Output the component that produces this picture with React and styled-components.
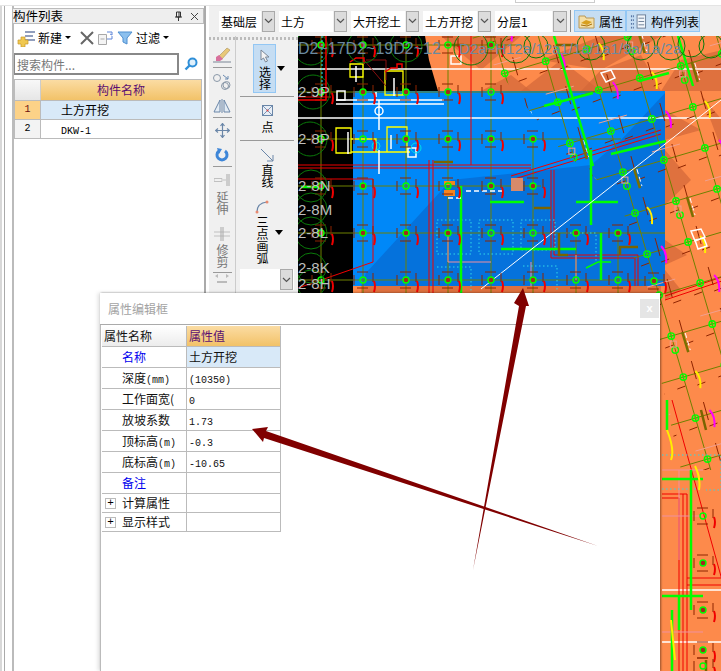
import React from "react";
import styled, { createGlobalStyle } from "styled-components";

const CJK = `"Noto Sans CJK SC", "Liberation Sans", sans-serif`;

const Global = createGlobalStyle`
  html, body { margin: 0; padding: 0; background: #fff; }
  body { font-family: ${CJK}; font-size: 12px; color: #000; }
`;

const Window = styled.div`
  position: relative;
  width: 721px;
  height: 671px;
  overflow: hidden;
  background: #fff;
  display: flex;
  flex-direction: column;
`;
const TopEdge = styled.div`
  height: 5px;
  flex: none;
  border-bottom: 1px solid #e4e4e4;
  display: flex;
  justify-content: flex-end;
  padding-right: 126px;
  div { width: 78px; height: 2px; border: 1px solid #ccc; border-top: none; }
`;
const Main = styled.div`
  flex: 1;
  display: flex;
  min-height: 0;
`;
const Sliver = styled.div`
  width: 4px;
  margin-right: 7px;
  flex: none;
  border-right: 1px solid #aaa;
  background: linear-gradient(to right, #d8d8d8 2px, #fff 2px);
`;

/* left list panel */
const ListPanel = styled.div`
  width: 190px;
  flex: none;
  border-left: 2px solid #bbb;
  border-right: 2px solid #aaa;
  padding-top: 2px;
  display: flex;
  flex-direction: column;
`;
const PanelTitle = styled.div`
  height: 14px;
  margin-left: -2px;
  background: #eee;
  border: 1px solid #bbb;
  display: flex;
  align-items: center;
  justify-content: space-between;
  padding-right: 4px;
  line-height: 14px;
  font-size: 12.5px;
`;
const TitleIcons = styled.div`
  display: flex;
  gap: 7px;
  align-items: center;
`;
const ListToolbar = styled.div`
  height: 27px;
  display: flex;
  align-items: center;
  padding-left: 3px;
  gap: 3px;
`;
const ToolLabel = styled.span`
  display: flex;
  align-items: center;
  gap: 2px;
  margin-right: ${(p) => p.$mr || 0}px;
`;
const Caret = styled.i`
  display: inline-block;
  width: 0;
  height: 0;
  border: 3px solid transparent;
  border-top: 3px solid #000;
  border-bottom: none;
  margin-left: 1px;
`;
const SearchRow = styled.div`
  display: flex;
  align-items: center;
  height: 25px;
  gap: 5px;
`;
const SearchBox = styled.div`
  width: 165px;
  height: 22px;
  border: 1px solid #888;
  border-width: 2px 2px 2px 1px;
  color: #777;
  padding-left: 2px;
  line-height: 20px;
  box-sizing: border-box;
  letter-spacing: 0;
`;
const ListTable = styled.div`
  margin: 3px 1px 0 0;
  width: 188px;
  border: 1px solid #bbb;
  border-top-width: 1px;
  display: grid;
  grid-template-columns: 26px 1fr;
  grid-template-rows: 20px 19px 19px;
  box-sizing: border-box;
`;
const HeadCorner = styled.div`
  background: linear-gradient(#f8f8f8, #e6e6e6);
  border-right: 1px solid #ccc;
`;
const HeadCell = styled.div`
  background: linear-gradient(#fbdca3, #f2c268);
  color: #5b0f72;
  text-align: center;
  line-height: 20px;
`;
const RowNum = styled.div`
  background: ${(p) => (p.$active ? "#fcd288" : "#f3f3f3")};
  color: ${(p) => (p.$active ? "#6b1010" : "#000")};
  border-top: 1px solid #bbb;
  border-right: 1px solid #bbb;
  text-align: center;
  font: 10px/18px "Liberation Mono", monospace;
`;
const RowCell = styled.div`
  background: ${(p) => (p.$active ? "#d8e9f8" : "#fff")};
  border-top: 1px solid #bbb;
  padding-left: 20px;
  line-height: 18px;
`;
const Mono = styled.span`
  font: 10px "Liberation Mono", monospace;
`;

/* right side */
const Workspace = styled.div`
  flex: 1;
  display: flex;
  flex-direction: column;
  min-width: 0;
  padding-left: 3px;
`;
const TopBar = styled.div`
  height: 30px;
  flex: none;
  background: #f0f0f0;
  display: flex;
  align-items: center;
  padding-left: 10px;
  gap: 4px;
  margin-top: 0;
`;
const Combo = styled.div`
  display: flex;
  gap: 1px;
  height: 21px;
`;
const ComboField = styled.div`
  width: ${(p) => p.$w}px;
  background: #fff;
  padding-left: 2px;
  box-sizing: border-box;
  line-height: 21px;
  white-space: nowrap;
  overflow: hidden;
`;
const ComboBtn = styled.div`
  width: ${(p) => p.$w || 13}px;
  box-sizing: border-box;
  background: #dcdcdc;
  border: 1px solid #aaa;
  display: flex;
  align-items: center;
  justify-content: center;
`;
const BarSep = styled.div`
  width: 1px;
  height: 22px;
  background: #888;
  margin: 0 3px 0 -1px;
`;
const ToggleBtn = styled.div`
  height: 22px;
  width: ${(p) => p.$w}px;
  box-sizing: border-box;
  background: #c5ddf3;
  border: 1px solid #93c7f4;
  display: flex;
  align-items: center;
  gap: 4px;
  padding-left: 3px;
  margin-left: -4px;
  white-space: nowrap;
`;
const Body = styled.div`
  flex: 1;
  display: flex;
  min-height: 0;
`;
const ToolStrip = styled.div`
  width: 89px;
  height: 258px;
  flex: none;
  display: flex;
  background: #f0f0f0;
`;
const ToolCol = styled.div`
  width: ${(p) => p.$w}px;
  flex: none;
  box-sizing: border-box;
  border-right: ${(p) => (p.$line ? "1px solid #ccc" : "none")};
  overflow: hidden;
  display: flex;
  flex-direction: column;
  align-items: center;
`;
const Handle = styled.div`
  height: 3px;
  width: 100%;
  flex: none;
  margin: 1px 0 3px;
  background: repeating-linear-gradient(to right, #bbb 0 2px, transparent 2px 4px);
`;
const Slot = styled.div`
  height: ${(p) => p.$h}px;
  flex: none;
  display: flex;
  flex-direction: column;
  align-items: center;
  gap: ${(p) => p.$gap || 0}px;
  justify-content: ${(p) => (p.$top ? "flex-start" : "center")};
  color: ${(p) => (p.$dim ? "#777" : "#000")};
`;
const ToolSep = styled.div`
  height: 1px;
  flex: none;
  width: ${(p) => p.$w}px;
  background: #999;
`;
const VText = styled.div`
  writing-mode: vertical-rl;
  text-orientation: upright;
  white-space: nowrap;
  flex: none;
  line-height: 14px;
  font-size: 12px;
`;
const SelectWrap = styled.div`
  width: 100%;
  height: 50px;
  flex: none;
  display: flex;
  align-items: center;
  justify-content: center;
  padding-left: 4px;
  box-sizing: border-box;
  gap: 1px;
`;
const SelectBtn = styled.div`
  width: 23px;
  height: 49px;
  box-sizing: border-box;
  background: #c5ddf3;
  border: 1px solid #93c7f4;
  display: flex;
  flex-direction: column;
  align-items: center;
  gap: 3px;
  padding-top: 4px;
`;
const ArcRow = styled.div`
  display: flex;
  align-items: center;
  gap: 6px;
  padding-left: 4px;
`;
const ArcCol = styled.div`
  display: flex;
  flex-direction: column;
  align-items: center;
  gap: 2px;
`;
const MiniCombo = styled.div`
  width: 54px;
  height: 21px;
  flex: none;
  display: flex;
  justify-content: flex-end;
  background: #fff;
  padding-right: 1px;
  box-sizing: border-box;
`;
const CanvasBox = styled.div`
  flex: 1;
  min-width: 0;
  overflow: hidden;
  svg { display: block; }
`;

/* dialog */
const Dialog = styled.div`
  position: absolute;
  left: 100px;
  top: 293px;
  width: 560px;
  height: 378px;
  background: #fff;
  box-shadow: -2px 0 4px rgba(0, 0, 0, 0.13), 1px 0 2px rgba(0, 0, 0, 0.4);
  display: flex;
  flex-direction: column;
`;
const DialogHead = styled.div`
  height: 32px;
  flex: none;
  box-sizing: border-box;
  border-bottom: 1px solid #aaa;
  display: flex;
  align-items: center;
  justify-content: space-between;
  padding: 0 1px 0 8px;
  color: #a3a3a3;
`;
const CloseBtn = styled.div`
  width: 19px;
  height: 19px;
  background: #e5e5e5;
  color: #fff;
  font: bold 11px/19px "Liberation Sans", sans-serif;
  text-align: center;
`;
const DialogBody = styled.div`
  flex: 1;
  border-left: 1px solid #bbb;
  padding: 1px 0 0 1px;
`;
const PropTable = styled.div`
  width: 179px;
  box-sizing: border-box;
  border: 1px solid #bbb;
  border-width: 0 1px 0 0;
  display: grid;
  grid-template-columns: 85px 93px;
`;
const PropName = styled.div`
  height: ${(p) => p.$h}px;
  box-sizing: border-box;
  border-bottom: 1px solid #bbb;
  border-right: 1px solid #bbb;
  padding-left: ${(p) => p.$pl ?? 20}px;
  line-height: ${(p) => p.$h - 1}px;
  color: ${(p) => (p.$link ? "#0000ee" : "#111")};
  background: ${(p) => (p.$head ? "linear-gradient(#fff, #ececec)" : "#fff")};
  display: flex;
  align-items: center;
  gap: 6px;
  white-space: nowrap;
  overflow: hidden;
`;
const PropValue = styled.div`
  height: ${(p) => p.$h}px;
  box-sizing: border-box;
  border-bottom: 1px solid #bbb;
  padding-left: 2px;
  line-height: ${(p) => p.$h - 1}px;
  color: ${(p) => (p.$head ? "#5b0f72" : "#111")};
  background: ${(p) =>
    p.$head ? "linear-gradient(#fbdca3, #f2c268)" : p.$active ? "#d8e9f8" : "#fff"};
`;
const Expand = styled.span`
  width: 11px;
  height: 11px;
  margin-left: -17px;
  box-sizing: border-box;
  flex: none;
  border: 1px solid #bbb;
  font: 11px/9px "Liberation Mono", monospace;
  text-align: center;
  color: #000;
`;
const ArrowLayer = styled.svg`
  position: absolute;
  left: 0;
  top: 0;
  pointer-events: none;
`;

/* ---- CAD drawing data ---- */
const OLIVE = "#6f8000";
const DRED = "#8e2400";
const LIME = "#00ff00";
const PEACH = "#f0a090";

const STRAIGHT = [];
[45, 92, 139].forEach((y) =>
  [320, 362, 405, 447, 490].forEach((x) => STRAIGHT.push([x, y]))
);
STRAIGHT.push([532, 139]);
[186, 233, 280].forEach((y) =>
  [320, 362, 405, 447, 490, 532].forEach((x) => STRAIGHT.push([x, y]))
);
[[575, 233], [617, 233], [575, 280], [617, 280], [653, 281]].forEach((p) => STRAIGHT.push(p));

const U = [0.96, -0.283];
const V = [0.283, 0.96];
const rot = (i, j) => [
  675 + 42.7 * (i * U[0] + j * V[0]),
  201 + 42.7 * (i * U[1] + j * V[1]),
];
const CELLS = [];
for (let i = -5; i < 4; i++) for (let j = -5; j < 7; j++) CELLS.push([i, j]);

const BUBBLES = [
  [310, 48, 17], [362, 47, 16], [405, 46, 16], [470, 48, 17], [515, 48, 15], [535, 46, 12],
  [312, 92, 17], [309, 139, 17], [310, 186, 16], [310, 209, 16], [310, 233, 16], [310, 268, 15],
  [310, 284, 14], [590, 46, 14], [640, 46, 14], [670, 46, 14], [690, 44, 13], [710, 46, 12],
];

const LABELS = [
  ["D2~17D2~19D2~12", 297, 54, 16],
  ["D2a~H12a/12a1/1a/1a1/9a/1a/2a", 458, 54, 15],
  ["2-9P", 297, 97, 15],
  ["2-8P", 297, 144, 15],
  ["2-8N", 297, 191, 15],
  ["2-8M", 297, 215, 15],
  ["2-8L", 297, 238, 15],
  ["2-8K", 297, 273, 15],
  ["2-8H", 297, 289, 15],
];

const FACETS = [
  "480,91 510,75 530,91", "520,91 560,60 600,91", "580,91 600,70 640,55 660,91",
  "540,60 600,36 660,36 600,70", "660,91 680,60 721,50 721,91", "440,36 520,36 480,70",
  "664,150 690,180 664,205", "664,240 686,255 664,265", "664,110 700,130 664,140",
  "664,270 680,290 664,300", "700,95 721,120 721,150", "360,286 660,286 660,294 360,294",
];

function GridNode({ x, y }) {
  return (
    <g>
      <g stroke={DRED} strokeWidth="1" fill="none">
        <path d={`M${x - 6} ${y - 8}h11M${x - 6} ${y + 8}h11M${x - 9} ${y - 5}v10M${x + 10} ${y - 7}v9`} />
        <path d={`M${x + 11} ${y + 1}q2 5 0 11`} stroke="#f00000" strokeWidth="2" />
      </g>
      <circle cx={x} cy={y} r="3" fill={(x + y) % 3 ? "#a02a20" : "none"} stroke={LIME} strokeWidth="1.4" />
    </g>
  );
}

function CadDrawing() {
  const lines = [];
  for (let i = -6; i < 5; i++) {
    const a = rot(i, -6);
    const b = rot(i, 8);
    lines.push(`M${a[0]} ${a[1]}L${b[0]} ${b[1]}`);
  }
  for (let j = -6; j < 8; j++) {
    const a = rot(-6, j);
    const b = rot(5, j);
    lines.push(`M${a[0]} ${a[1]}L${b[0]} ${b[1]}`);
  }
  return (
    <svg width="424" height="635" viewBox="297 36 424 635">
      <defs>
        <clipPath id="rotZone">
          <polygon points="470,36 721,36 721,470 680,470 620,200 560,150 520,100" />
        </clipPath>
      </defs>
      <rect x="297" y="36" width="424" height="635" fill="#fd8a4b" />
      {FACETS.map((p) => (
        <polygon key={p} points={p} fill="#d4683a" opacity="0.75" />
      ))}
      <polygon points="297,36 424,36 428,60 437,91 352,91 352,294 297,294" fill="#000" />
      <rect x="352" y="91" width="312" height="195" fill="#0088f8" />
      <polygon points="664,93 620,140 590,165 450,180 365,273 360,286 664,286" fill="#0572dc" />

      {/* straight axis grid */}
      <g stroke={OLIVE} strokeWidth="1" fill="none">
        <path d="M297 45H520M297 92H620M297 139H620M297 186H540M297 233H664M297 280H664" />
        <path d="M320 36V294M362 36V294M405 36V294M447 36V294M490 36V294M532 139V294M575 233V294M617 233V294" />
      </g>
      <g stroke="#fff" strokeWidth="1.5">
        <path d="M297 69H721M297 118H721M661 590H721M661 642H721" />
      </g>
      <g stroke="#f00000" strokeWidth="1" fill="none">
        <path d="M297 165H530M297 168H530M297 97H330" />
        <path d="M470 36V165M428 160V294M432 160V294M553 170V255M550 170V258M553 255H637M550 258H634M637 255V286M634 258V286" />
        <path d="M297 288L372 262V179H297" />
        <path d="M660 130L510 176M660 134L510 180M664 296L721 277M664 300L721 281" />
        <path d="M671 400L721 580M661 494H686M682 494V671M686 494V671M686 585H721M686 578H721M661 498H678M678 498V671" />
      </g>
      <g stroke="#f090a0" strokeWidth="1" fill="none">
        <path d="M447 262H490M447 262V233M575 280V255M530 262V286M661 470H702M678 470V560M661 516H700M661 632H702" />
      </g>

      {/* rotated building block */}
      <g clipPath="url(#rotZone)">
        <path d={lines.join("")} stroke={OLIVE} strokeWidth="1" fill="none" />
        {CELLS.map(([i, j]) => {
          const [x, y] = rot(i, j);
          if (y > 470 || x > 730) return null;
          const k = (i * 7 + j * 13 + 100) % 4;
          return (
            <g key={`${i}_${j}`}>
              <path
                d={`M${x + 8} ${y - 16}l5 18M${x - 6} ${y + 12}l8 -3M${x + 14} ${y + 8}l8 -3`}
                stroke={DRED}
                fill="none"
              />
              <circle cx={x} cy={y} r="3.2" fill="none" stroke={LIME} strokeWidth="1.4" />
              <path d={`M${x - 3} ${y}h6M${x} ${y - 3}v6`} stroke={LIME} strokeWidth="0.8" />
              {k === 0 && (
                <g>
                  <circle cx={x + 4} cy={y + 14} r="3.2" fill="none" stroke={LIME} strokeWidth="1.4" />
                  <rect x={x - 1} y={y + 5} width="6" height="6" fill="none" stroke={PEACH} />
                  <path d={`M${x + 11} ${y - 4}l6 20`} stroke="#7a7000" strokeWidth="2.5" />
                  <path d={`M${x + 14} ${y - 3}l5 17`} stroke="#fff" strokeWidth="1" strokeDasharray="5 3" />
                </g>
              )}
              {k === 1 && <path d={`M${x + 12} ${y - 6}q6 6 5 17`} stroke="#ffee00" strokeWidth="2" fill="none" />}
              {k === 2 && <path d={`M${x + 14} ${y - 8}q6 6 5 17`} stroke="#ff00ff" strokeWidth="2" fill="none" />}
              {k === 3 && <path d={`M${x - 12} ${y - 8}l28 -8`} stroke={PEACH} fill="none" />}
            </g>
          );
        })}
      </g>

      {/* cyan dotted zones */}
      <g stroke="#30d8e8" strokeDasharray="1.5 2.5" fill="none">
        <path d="M436 220h34v34h-34zM478 220h34v34h-34zM436 267h34v26M520 220h34v30h-34zM565 233h30v30M522 266h34v26M705 455h15v35h-15M661 455h44M661 489h40" />
      </g>

      {/* thick green walls */}
      <g stroke={LIME} strokeWidth="2.5" fill="none">
        <path d="M460 186V294M489 202H523M575 202H617M590 150V225M500 249H575M600 233V280" />
        <path d="M553 36L592 166M543 106L592 93M638 81L668 73M610 154L665 141M677 36L692 86M300 187H318" />
        <path d="M666 400V430M661 479H702M690 470V610M661 596H702M671 610V671M678 596V630" />
        <path d="M585 268L597 262H610" strokeWidth="1.5" />
      </g>
      <g stroke="#7a6400" strokeWidth="2.5" fill="none">
        <path d="M433 162H452M533 208H550M558 233V255H567M618 247H637M619 247V255M443 45h20M555 45h20M700 410l5 20M705 660v11" />
      </g>

      {/* column outlines */}
      <g stroke="#ffff00" strokeWidth="1.3" fill="none">
        <path d="M349 64h13v13h-13zM384 71h18v24h-18zM335 128h15v25h-15zM350 139h25v13h-25zM386 127h20v25h-20zM375 152h34" />
        <path d="M666 430q8 20 4 30M694 466q6 12 4 24M670 620l4 40" stroke="#ffee00" strokeWidth="2" />
      </g>
      <g stroke="#fff" strokeWidth="1.5" fill="none">
        <path d="M355 66v16M393 78v18M347 132v22M390 135v14M378 150v24M375 92v5" />
        <path d="M335 100h108M335 104h108M378 100v30" />
        <circle cx="378" cy="111" r="4" />
        <rect x="336" y="91" width="8" height="9" />
        <rect x="407" y="148" width="8" height="9" />
        <rect x="450" y="56" width="10" height="8" />
        <path d="M690 231l10 -2 4 8 -10 4z M694 240l9 -2 3 8 -9 3z M600 73l10 -3 4 8 -9 4z" />
        <path d="M447 198h14M465 191h40" strokeDasharray="5 3" />
      </g>
      <path d="M480 289L720 100" stroke="#fff" strokeWidth="1" />
      <path d="M363 60l22 26M365 60h20v20" stroke="#8a1010" fill="none" />
      <path d="M349 62l6 -4h8v6M384 72l6 -4h6v-4h5v4" stroke="#f00000" strokeWidth="1.5" fill="none" />
      <circle cx="375" cy="146" r="4" fill="none" stroke="#00e0e8" />
      <circle cx="415" cy="148" r="5" fill="none" stroke="#00e0e8" />
      <path d="M443 181h11v4h-11zM443 190h11v6h-11z" fill="#f5841f" />
      <path d="M510 178h12v5h-12zM510 183h12v8h-12z" fill="#d88a6a" />

      {STRAIGHT.map(([x, y]) => (
        <GridNode key={`${x}_${y}`} x={x} y={y} />
      ))}
      {[[702, 516], [702, 563], [702, 610], [702, 650], [702, 666]].map(([x, y]) => (
        <GridNode key={`${x}_${y}`} x={x} y={y} />
      ))}

      {BUBBLES.map(([x, y, r]) => (
        <circle key={`${x}_${y}`} cx={x} cy={y} r={r} fill="none" stroke="#0a7a0a" />
      ))}
      <path d="M325 36V100H297" stroke="#f00000" strokeWidth="1.5" fill="none" />
      <path d="M321 36V95" stroke="#20e8ff" strokeDasharray="2 2" fill="none" />
      {LABELS.map(([t, x, y, s]) => (
        <text
          key={t}
          x={x}
          y={y}
          fontSize={s}
          fontFamily="'Liberation Sans', sans-serif"
          fill={y < 60 ? "#6a8aa0" : "#bdbdbd"}
        >
          {t}
        </text>
      ))}
    </svg>
  );
}

/* ---- small icons ---- */
const Chevron = () => (
  <svg width="9" height="6" viewBox="0 0 9 6">
    <path d="M1 1l3.5 3.5L8 1" stroke="#555" fill="none" strokeWidth="1.2" />
  </svg>
);
const NewIcon = () => (
  <svg width="19" height="18" viewBox="0 0 19 18">
    <path d="M8 3h10M8 7h8M8 11h10" stroke="#6d7fa8" strokeWidth="1.4" />
    <path d="M4 8h4v3h3v4H8v3H4v-3H1v-4h3z" fill="#f0c850" stroke="#c89828" strokeWidth="0.7" />
  </svg>
);
const CrossIcon = () => (
  <svg width="14" height="14" viewBox="0 0 14 14">
    <path d="M1 1l12 12M13 1L1 13" stroke="#666" strokeWidth="2" />
  </svg>
);
const CopyIcon = () => (
  <svg width="17" height="15" viewBox="0 0 17 15">
    <path d="M1.5 4.5h8v10h-8z" fill="#f4f4f4" stroke="#a8a8a8" />
    <path d="M3.5 9h4" stroke="#aaa" />
    <path d="M10 2h5M15 2v3l-2 -1M10 9h5v-3" stroke="#5f86d8" fill="none" />
  </svg>
);
const FunnelIcon = () => (
  <svg width="16" height="14" viewBox="0 0 16 14">
    <path d="M1 1h14L10 7v6l-4 -2V7z" fill="#8cc0ee" stroke="#4f8fd0" />
  </svg>
);
const SearchIcon = () => (
  <svg width="14" height="14" viewBox="0 0 14 14">
    <circle cx="8.5" cy="5.5" r="4" fill="#dff0fc" stroke="#2f8fd8" strokeWidth="2" />
    <path d="M5.5 8.5L1.5 12.5" stroke="#2f8fd8" strokeWidth="2.4" />
  </svg>
);
const PinIcon = () => (
  <svg width="9" height="10" viewBox="0 0 9 10">
    <path d="M2.5 1h4v5h-4zM1 6h7M4.5 6v4M5 1v5" stroke="#333" fill="none" />
  </svg>
);
const CloseIcon = () => (
  <svg width="9" height="9" viewBox="0 0 9 9">
    <path d="M1 1l7 7M8 1L1 8" stroke="#444" />
  </svg>
);
const FolderIcon = () => (
  <svg width="17" height="15" viewBox="0 0 17 15">
    <path d="M1 2h6l1 2h8v10H1z" fill="#f4dfa8" stroke="#b89858" />
    <path d="M3 9l5 -3 6 2 -5 3z" fill="#d8a020" />
    <path d="M3 11l6 1 5 -2" stroke="#a87008" fill="none" />
  </svg>
);
const ListIcon = () => (
  <svg width="18" height="15" viewBox="0 0 18 15">
    <path d="M1 2h3M1 6h3M1 10h3M1 14h3" stroke="#4a6a9a" strokeDasharray="1 1" strokeWidth="2" />
    <rect x="7.5" y="0.5" width="9" height="14" fill="#f2f6fa" stroke="#6c7f98" />
    <path d="M9 4h6M9 7.5h6M9 11h6" stroke="#6c7f98" />
  </svg>
);
const BrushIcon = () => (
  <svg width="18" height="16" viewBox="0 0 18 16">
    <path d="M5 10L14 1l3 2-8 9z" fill="#e8c878" stroke="#a89060" strokeWidth="0.6" />
    <path d="M3 10l3 -2 4 4 -3 2H3z" fill="#d8709c" />
    <path d="M0 15h18" stroke="#7a8696" />
  </svg>
);
const CirclesIcon = () => (
  <svg width="18" height="18" viewBox="0 0 18 18">
    <circle cx="4" cy="5" r="3.5" fill="none" stroke="#8a98a8" />
    <circle cx="12" cy="13" r="3.5" fill="none" stroke="#8a98a8" />
    <circle cx="13.5" cy="12" r="3.5" fill="none" stroke="#8a98a8" />
    <path d="M10 2l5 4M15 3v3h-3" stroke="#6a8ab0" fill="none" />
  </svg>
);
const MirrorIcon = () => (
  <svg width="18" height="14" viewBox="0 0 18 14">
    <path d="M1 13L7 1v12zM17 13L11 1v12z" fill="#e4ecf4" stroke="#6a86a8" />
    <path d="M9 0v14" stroke="#6a86a8" />
  </svg>
);
const MoveIcon = () => (
  <svg width="15" height="15" viewBox="0 0 15 15">
    <path d="M7.5 1v13M1 7.5h13M5.5 3l2 -2.5 2 2.500M5.500 12l2 2.500 2 -2.500M3 5.500L.5 7.500 3 9.500M12 5.500l2.500 2 -2.500 2" stroke="#6a86a8" strokeWidth="1.2" fill="none" />
  </svg>
);
const RotateIcon = () => (
  <svg width="14" height="14" viewBox="0 0 14 14">
    <path d="M4 3a5 5 0 1 0 6 0" stroke="#3e86d8" strokeWidth="3" fill="none" />
    <path d="M2 0l5 1 -3 5z" fill="#3e86d8" />
  </svg>
);
const ExtendIcon = () => (
  <svg width="16" height="12" viewBox="0 0 16 12">
    <path d="M0 4.500h8v3H0zM9 6h3" stroke="#c0c0c0" fill="none" />
    <path d="M13 0v12M15 0v12" stroke="#a8a8a8" />
  </svg>
);
const TrimIcon = () => (
  <svg width="16" height="14" viewBox="0 0 16 14">
    <path d="M0 5h16M0 9h16" stroke="#c0c0c0" />
    <path d="M7 0v14M9 0v14" stroke="#a8a8a8" />
  </svg>
);
const MoreIcon = () => (
  <svg width="16" height="10" viewBox="0 0 16 10">
    <path d="M1 3l3 -2v4zM15 3l-3 -2v4zM3 8h10v2H3z" fill="#bbb" />
  </svg>
);
const CursorIcon = () => (
  <svg width="10" height="14" viewBox="0 0 10 14">
    <path d="M1 1v10l2.500 -2 2 4 2 -1 -2 -4h3.500z" fill="#f4f4f4" stroke="#7a8696" />
  </svg>
);
const PointIcon = () => (
  <svg width="11" height="11" viewBox="0 0 11 11">
    <rect x="0.500" y="0.500" width="10" height="10" fill="#e8eef6" stroke="#6a86a8" />
    <path d="M1 1l9 9M10 1l-9 9" stroke="#7a94b4" />
    <circle cx="5.500" cy="5.500" r="1" fill="#e04040" />
  </svg>
);
const LineIcon = () => (
  <svg width="14" height="14" viewBox="0 0 14 14">
    <path d="M1 1l12 12M13 7v6H7" stroke="#6a86a8" fill="none" />
  </svg>
);
const ArcIcon = () => (
  <svg width="14" height="14" viewBox="0 0 14 14">
    <path d="M2 12Q2 3 12 2" stroke="#6a86a8" fill="none" strokeWidth="1.2" />
    <circle cx="2" cy="12" r="1.500" fill="#e88a70" />
    <circle cx="12" cy="2" r="1.500" fill="#e88a70" />
  </svg>
);
const DropArrow = () => (
  <svg width="8" height="5" viewBox="0 0 8 5">
    <path d="M0 0h8L4 5z" fill="#000" />
  </svg>
);

const COMBOS = [
  ["基础层", 42, 13],
  ["土方", 54, 13],
  ["大开挖土", 54, 13],
  ["土方开挖", 54, 13],
  ["分层1", 57, 14],
];

const PROPS = [
  { name: "名称", value: "土方开挖", link: true, active: true },
  { name: "深度", unit: "(mm)", value: "(10350)", mono: true },
  { name: "工作面宽(", value: "0", mono: true },
  { name: "放坡系数", value: "1.73", mono: true },
  { name: "顶标高", unit: "(m)", value: "-0.3", mono: true },
  { name: "底标高", unit: "(m)", value: "-10.65", mono: true },
  { name: "备注", value: "", link: true },
];

function App() {
  return (
    <Window>
      <Global />
      <TopEdge>
        <div />
      </TopEdge>
      <Main>
        <Sliver />
        <ListPanel>
          <PanelTitle>
            构件列表
            <TitleIcons>
              <PinIcon />
              <CloseIcon />
            </TitleIcons>
          </PanelTitle>
          <ListToolbar>
            <ToolLabel $mr={6}>
              <NewIcon />
              新建
              <Caret />
            </ToolLabel>
            <CrossIcon />
            <CopyIcon />
            <FunnelIcon />
            <ToolLabel>
              过滤
              <Caret />
            </ToolLabel>
          </ListToolbar>
          <SearchRow>
            <SearchBox>搜索构件...</SearchBox>
            <SearchIcon />
          </SearchRow>
          <ListTable>
            <HeadCorner />
            <HeadCell>构件名称</HeadCell>
            <RowNum $active>1</RowNum>
            <RowCell $active>土方开挖</RowCell>
            <RowNum>2</RowNum>
            <RowCell>
              <Mono>DKW-1</Mono>
            </RowCell>
          </ListTable>
        </ListPanel>
        <Workspace>
          <TopBar>
            {COMBOS.map(([label, w, bw]) => (
              <Combo key={label}>
                <ComboField $w={w}>{label}</ComboField>
                <ComboBtn $w={bw}>
                  <Chevron />
                </ComboBtn>
              </Combo>
            ))}
            <BarSep />
            <ToggleBtn $w={52}>
              <FolderIcon />
              属性
            </ToggleBtn>
            <ToggleBtn $w={74}>
              <ListIcon />
              构件列表
            </ToggleBtn>
          </TopBar>
          <Body>
            <ToolStrip>
              <ToolCol $w={27} $line>
                <Handle />
                <Slot $h={24}>
                  <BrushIcon />
                </Slot>
                <ToolSep $w={19} />
                <Slot $h={27}>
                  <CirclesIcon />
                </Slot>
                <Slot $h={22}>
                  <MirrorIcon />
                </Slot>
                <ToolSep $w={19} />
                <Slot $h={25}>
                  <MoveIcon />
                </Slot>
                <Slot $h={23}>
                  <RotateIcon />
                </Slot>
                <ToolSep $w={19} />
                <Slot $h={55} $dim $gap={5}>
                  <ExtendIcon />
                  <VText>延伸</VText>
                </Slot>
                <Slot $h={50} $dim $gap={3}>
                  <TrimIcon />
                  <VText>修剪</VText>
                </Slot>
                <ToolSep $w={19} />
                <Slot $h={18} $top>
                  <MoreIcon />
                </Slot>
              </ToolCol>
              <ToolCol $w={62}>
                <Handle />
                <SelectWrap>
                  <SelectBtn>
                    <CursorIcon />
                    <VText>选择</VText>
                  </SelectBtn>
                  <DropArrow />
                </SelectWrap>
                <Slot $h={3} />
                <ToolSep $w={54} />
                <Slot $h={43} $gap={5}>
                  <PointIcon />
                  <VText>点</VText>
                </Slot>
                <ToolSep $w={54} />
                <Slot $h={54} $gap={2}>
                  <LineIcon />
                  <VText>直线</VText>
                </Slot>
                <Slot $h={74}>
                  <ArcRow>
                    <ArcCol>
                      <ArcIcon />
                      <VText>三点画弧</VText>
                    </ArcCol>
                    <DropArrow />
                  </ArcRow>
                </Slot>
                <MiniCombo>
                  <ComboBtn $w={13}>
                    <Chevron />
                  </ComboBtn>
                </MiniCombo>
              </ToolCol>
            </ToolStrip>
            <CanvasBox>
              <CadDrawing />
            </CanvasBox>
          </Body>
        </Workspace>
      </Main>

      <Dialog>
        <DialogHead>
          属性编辑框
          <CloseBtn>x</CloseBtn>
        </DialogHead>
        <DialogBody>
          <PropTable>
            <PropName $head $h={21} $pl={2}>
              属性名称
            </PropName>
            <PropValue $head $h={21}>
              属性值
            </PropValue>
            {PROPS.map((r) => (
              <React.Fragment key={r.name}>
                <PropName $h={21} $link={r.link}>
                  <span>
                    {r.name}
                    {r.unit && <Mono>{r.unit}</Mono>}
                  </span>
                </PropName>
                <PropValue $h={21} $active={r.active}>
                  {r.mono ? <Mono>{r.value}</Mono> : r.value}
                </PropValue>
              </React.Fragment>
            ))}
            {["计算属性", "显示样式"].map((n) => (
              <React.Fragment key={n}>
                <PropName $h={19}>
                  <Expand>+</Expand>
                  {n}
                </PropName>
                <PropValue $h={19} />
              </React.Fragment>
            ))}
          </PropTable>
        </DialogBody>
      </Dialog>

      <ArrowLayer width="721" height="671" viewBox="0 0 721 671">
        <polygon points="523,288 529,306 526,306 473,570 519,306 514,303" fill="#800000" />
        <polygon points="252,429 268,427 266,431 598,546 264,438 263,442" fill="#800000" />
      </ArrowLayer>
    </Window>
  );
}

export default App;
